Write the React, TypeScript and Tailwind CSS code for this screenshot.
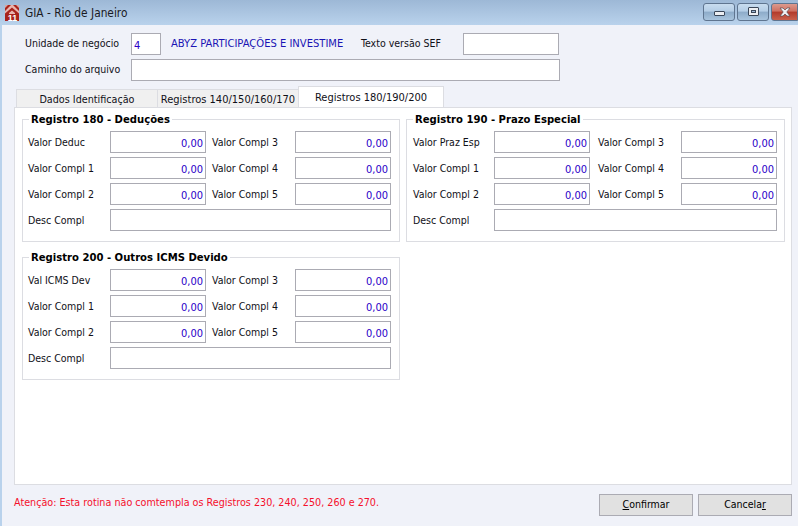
const font = "font-['DejaVu_Sans_Condensed','Noto_Sans',sans-serif]";

function Input({ value, left, className = '' }: { value?: string; left?: boolean; className?: string }) {
  return (
    <div className={`h-[22px] border border-[#ababb3] bg-white px-[2px] pt-[2px] text-[11px] leading-[20px] text-[#2a00c8] ${left ? 'text-left' : 'text-right'} ${className}`}>
      {value}
    </div>
  );
}

function Group({ title, first, right }: { title: string; first: string; right?: boolean }) {
  const rows = [
    [first, 'Valor Compl 3'],
    ['Valor Compl 1', 'Valor Compl 4'],
    ['Valor Compl 2', 'Valor Compl 5'],
  ];
  return (
    <fieldset className={`h-[130px] border border-[#dcdde2] ${right ? 'w-[379px] pl-[6px]' : 'w-[378px] pl-[5px]'}`}>
      <legend className={`px-[2px] text-[11.2px] font-bold leading-[14px] text-black ${right ? 'ml-0' : 'ml-[1px]'}`}>
        <span className="relative top-[1px]">{title}</span>
      </legend>
      <div className="mt-[5px] flex flex-col gap-[4px] text-[10.5px]">
        {rows.map(([a, b]) => (
          <div key={a} className="flex h-[22px] items-center">
            <span className={`mt-[1px] ${right ? 'w-[81px]' : 'w-[82px]'}`}>{a}</span>
            <Input value="0,00" className="w-[96px]" />
            <span className={`mt-[1px] w-[83px] ${right ? 'ml-[8px]' : 'ml-[6px]'}`}>{b}</span>
            <Input value="0,00" className="w-[96px]" />
          </div>
        ))}
        <div className="flex h-[22px] items-center">
          <span className={`mt-[1px] ${right ? 'w-[81px]' : 'w-[82px]'}`}>Desc Compl</span>
          <Input className={right ? 'w-[283px]' : 'w-[281px]'} />
        </div>
      </div>
    </fieldset>
  );
}

function Logo() {
  return (
    <svg width="14" height="16" viewBox="0 0 14 16" className="shrink-0">
      <rect width="14" height="16" fill="#a8231c" />
      <path d="M0 0 H3 L0 3 Z M14 0 V3 L11 0 Z" fill="#d9a8a0" />
      <path d="M0 6 L6 0 H8 L14 6 V8.5 L7 2.5 L0 8.5 Z" fill="#e9b5ae" />
      <path d="M4 8 L7 5.5 L10 8 V9 H4 Z" fill="#e9b5ae" />
      <text x="7.5" y="15.5" textAnchor="middle" fill="#fff" fontSize="9" fontWeight="700" fontFamily="'Liberation Sans',sans-serif">11</text>
    </svg>
  );
}

function TitleButton({ children, className = '' }: { children?: React.ReactNode; className?: string }) {
  return (
    <div className={`flex h-[18px] items-center justify-center rounded-[3px] border border-[#5f7590] ${className}`}>
      {children}
    </div>
  );
}

const glass = 'bg-[linear-gradient(#c8dcef_0%,#b4cde6_45%,#8dabc9_50%,#a9c4de_100%)]';

export default function App() {
  return (
    <div className={`flex h-[526px] w-[798px] flex-col overflow-hidden bg-[#f0f2f9] ${font} text-[#101018]`}>
      {/* title bar */}
      <div className="flex h-[25px] shrink-0 items-center bg-gradient-to-b from-[#9db8d6] to-[#b9d2ec] pl-[5px]">
        <Logo />
        <span className="ml-[6px] mt-[3px] text-[11.8px] text-[#1a1a22]">GIA - Rio de Janeiro</span>
        <div className="mb-[2px] ml-auto flex gap-[2px]">
          <TitleButton className={`w-[32px] ${glass}`}>
            <div className="mt-[4px] h-[5px] w-[11px] rounded-[1px] border border-[#3a4658] bg-[#eceef2]" />
          </TitleButton>
          <TitleButton className={`w-[32px] ${glass}`}>
            <div className="flex h-[9px] w-[11px] items-center justify-center rounded-[1px] border border-[#3a4658] bg-[#eceef2]">
              <div className="h-[3px] w-[5px] border border-[#3a4658] bg-[#9db8d6]" />
            </div>
          </TitleButton>
          <TitleButton className="w-[27px] rounded-r-none border-[#4a1a1e] bg-[linear-gradient(#dc9a8e_0%,#cf6f60_45%,#b23a2b_50%,#c9604c_100%)]">
            <svg width="12" height="10" viewBox="0 0 12 10">
              <path d="M1 1 H4 L6 3 L8 1 H11 L7.8 5 L11 9 H8 L6 7 L4 9 H1 L4.2 5 Z" fill="#eef0f4" stroke="#5a4a50" strokeWidth="0.7" />
            </svg>
          </TitleButton>
        </div>
      </div>

      <div className="flex flex-1 flex-col border-l-2 border-[#b9d2ec]">
        {/* top form */}
        <div className="mt-[8px] flex h-[22px] items-center pl-[23px] text-[10.5px]">
          <span className="w-[106px]">Unidade de negócio</span>
          <Input className="w-[30px]" value="4" left />
          <span className="ml-[10px] w-[190px] text-[11.1px] text-[#1a14b4]">ABYZ PARTICIPAÇÕES E INVESTIME</span>
          <span className="w-[102px]">Texto versão SEF</span>
          <Input className="w-[96px]" />
        </div>
        <div className="mt-[4px] flex h-[22px] items-center pl-[23px] text-[10.5px]">
          <span className="w-[106px]">Caminho do arquivo</span>
          <Input className="w-[429px]" />
        </div>

        {/* tabs */}
        <div className="relative z-10 mt-[6px] flex h-[20px] items-end pl-[14px]">
          <div className="flex h-[18px] w-[141px] items-center justify-center border-t border-l border-[#dcdde2] bg-[#f0f0f0] pt-[3px] text-[10.7px]">Dados Identificação</div>
          <div className="flex h-[18px] w-[141px] items-center justify-center border-t border-l border-[#dcdde2] bg-[#f0f0f0] pt-[3px] text-[11px] whitespace-nowrap">Registros 140/150/160/170</div>
          <div className="flex h-[21px] w-[146px] items-center justify-center border border-b-0 border-[#dcdde2] bg-white pt-[3px] text-[11px]">Registros 180/190/200</div>
        </div>
        <div className="ml-[12px] flex h-[378px] w-[778px] flex-col gap-[8px] border border-[#dcdde2] bg-white pl-[7px] pt-[4px]">
          <div className="flex gap-[6px]">
            <Group title="Registro 180 - Deduções" first="Valor Deduc" />
            <Group title="Registro 190 - Prazo Especial" first="Valor Praz Esp" right />
          </div>
          <Group title="Registro 200 - Outros ICMS Devido" first="Val ICMS Dev" />
        </div>

        {/* footer */}
        <div className="mt-[9px] flex items-start pl-[12px]">
          <span className="mt-[1px] text-[10.7px] text-[#f5102c]">Atenção: Esta rotina não comtempla os Registros 230, 240, 250, 260 e 270.</span>
          <div className="ml-auto mr-[6px] flex gap-[5px] text-[10.5px] text-black">
            <div className="flex h-[22px] w-[94px] items-center justify-center border border-[#ababb3] bg-[#e1e1e1]">
              <span><span className="underline">C</span>onfirmar</span>
            </div>
            <div className="flex h-[22px] w-[94px] items-center justify-center border border-[#ababb3] bg-[#e1e1e1]">
              <span>Cancela<span className="underline">r</span></span>
            </div>
          </div>
        </div>
      </div>
    </div>
  );
}
